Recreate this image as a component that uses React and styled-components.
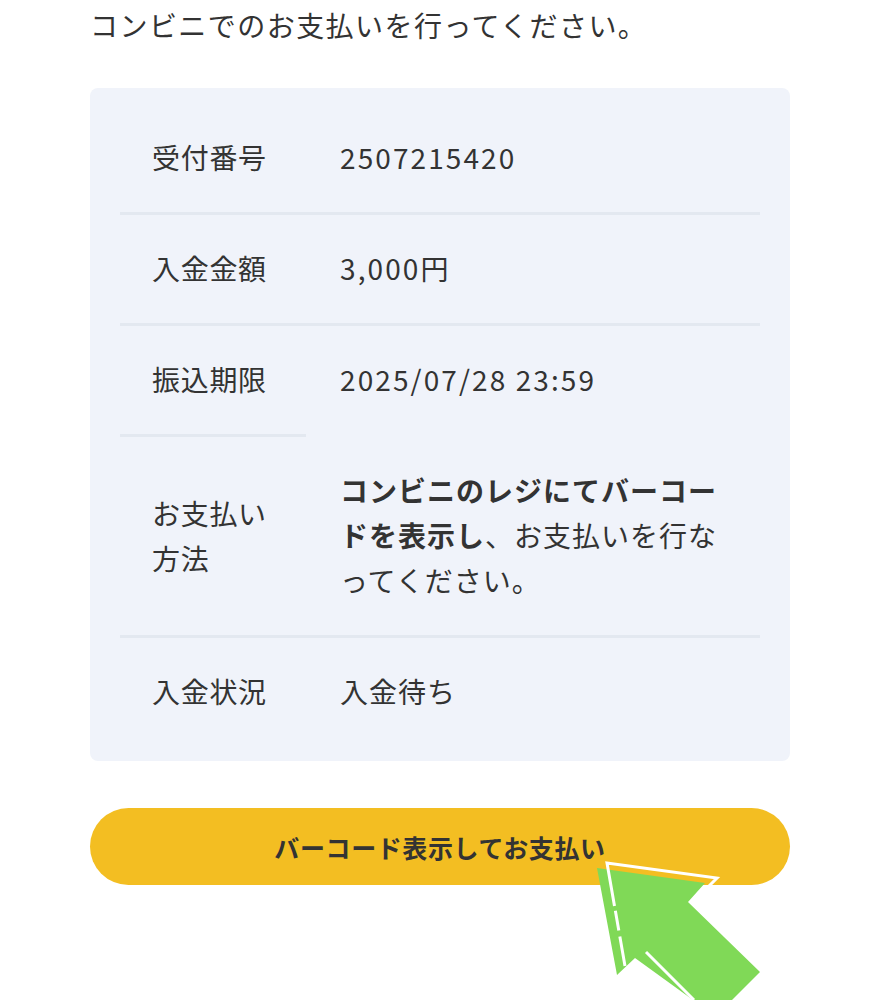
import styled, { createGlobalStyle } from 'styled-components'

const GlobalStyle = createGlobalStyle`
  html, body {
    margin: 0;
    padding: 0;
    background: #ffffff;
  }
  body {
    font-family: "Noto Sans CJK JP", "Noto Sans", sans-serif;
    color: #333333;
  }
`

const Page = styled.div`
  position: relative;
  width: 880px;
  height: 1000px;
  overflow: hidden;
  padding: 3px 90px 0;
  box-sizing: border-box;
`

const Lead = styled.p`
  margin: 0;
  font-size: 28px;
  line-height: 45px;
  letter-spacing: 1.45px;
`

const Card = styled.div`
  margin-top: 40px;
  background: #f0f3fa;
  border-radius: 8px;
  padding: 16px 30px 12px;
  display: grid;
  grid-template-columns: 186px 1fr;
`

const Cell = styled.div`
  display: flex;
  align-items: center;
  padding: 31px 0 32px;
  font-size: 28px;
  line-height: 45px;
  letter-spacing: 0.7px;
  border-bottom: 3px solid ${(p) => (p.$line ? '#e3e8f0' : 'transparent')};
`

const Label = styled(Cell)`
  padding-left: 32px;
  padding-right: 24px;
`

const Value = styled(Cell)`
  padding-left: 34px;
  padding-right: 30px;
  letter-spacing: 1px;
`

const ValueText = styled.span`
  letter-spacing: ${(p) => (p.$numeric ? '2.1px' : 'inherit')};

  strong {
    font-weight: 700;
  }
`

const PayButton = styled.button`
  margin-top: 47px;
  width: 100%;
  height: 77px;
  border: none;
  border-radius: 39px;
  background: #f3be22;
  color: #333333;
  font-family: "Noto Sans CJK JP", "Noto Sans", sans-serif;
  font-size: 25px;
  font-weight: 700;
  letter-spacing: 0.6px;
  cursor: pointer;
  display: block;
`

const Pointer = styled.svg`
  position: absolute;
  left: 580px;
  top: 850px;
  width: 200px;
  height: 150px;
  pointer-events: none;
`

const rows = [
  { label: '受付番号', value: '2507215420', numeric: true, line: [true, true] },
  { label: '入金金額', value: '3,000円', numeric: true, line: [true, true] },
  { label: '振込期限', value: '2025/07/28 23:59', numeric: true, line: [true, false] },
  {
    label: 'お支払い方法',
    value: (
      <>
        <strong>コンビニのレジにてバーコードを表示し</strong>、お支払いを行なってください。
      </>
    ),
    line: [true, true],
  },
  { label: '入金状況', value: '入金待ち', line: [false, false] },
]

const App = () => {
  return (
    <>
      <GlobalStyle />
      <Page>
        <Lead>コンビニでのお支払いを行ってください。</Lead>
        <Card>
          {rows.map((r) => [
            <Label key={r.label + 'l'} $line={r.line[0]}>{r.label}</Label>,
            <Value key={r.label + 'v'} $line={r.line[1]}>
              <ValueText $numeric={r.numeric}>{r.value}</ValueText>
            </Value>,
          ])}
        </Card>
        <PayButton>バーコード表示してお支払い</PayButton>

        <Pointer viewBox="580 850 200 150">
          <polygon
            points="597,868 705,883 688,902 760,972 732,1000 693,1000 635,958 617,975"
            fill="#80d957"
          />
          <polyline
            points="625,966 607,863 717,878 705,890"
            fill="none"
            stroke="#ffffff"
            strokeWidth="3"
            strokeDasharray="30 6 20 5 400"
          />
          <line x1="646" y1="952" x2="694" y2="1000" stroke="#ffffff" strokeWidth="3" />
        </Pointer>
      </Page>
    </>
  )
}

export default App
